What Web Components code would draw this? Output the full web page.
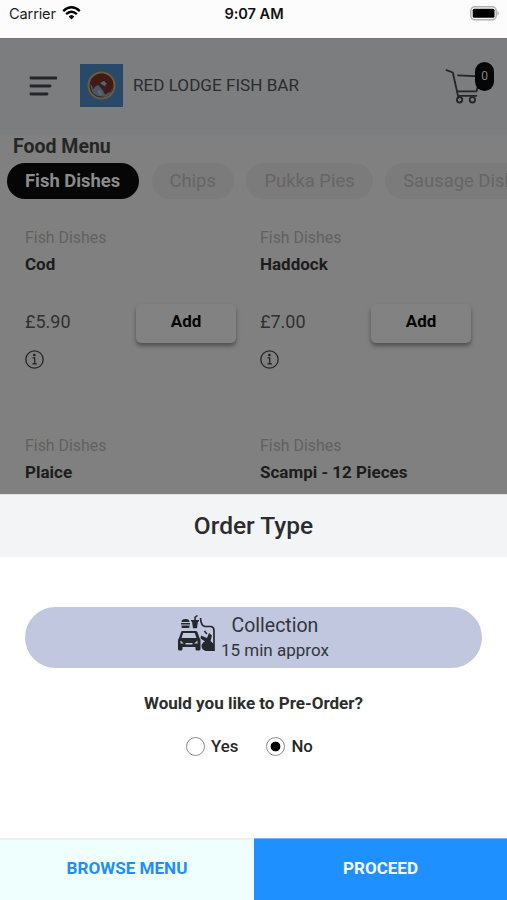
<!DOCTYPE html>
<html lang="en">
<head>
<meta charset="utf-8">
<title>Red Lodge Fish Bar</title>
<style>
html,body{margin:0;height:100%}
body{font-family:Roboto,"Liberation Sans",sans-serif;background:#fff;overflow:hidden}
</style>
</head>
<body>
<order-app></order-app>
<script>
function define(name, html) {
  const t = document.createElement('template');
  t.innerHTML = '<style>:host{display:block;box-sizing:border-box}*{box-sizing:border-box}</style>' + html;
  customElements.define(name, class extends HTMLElement {
    constructor() {
      super();
      this.attachShadow({mode: 'open'}).appendChild(t.content.cloneNode(true));
    }
  });
}

define('status-bar', `
<style>
:host{display:grid;grid-template-columns:1fr auto 1fr;align-items:center;height:38px;padding:0 8px 10px 9px;background:#fcfcfc;color:#1c1c1c;font:14.6px/28px Inter,sans-serif}
.l{display:flex;align-items:center;gap:6px;letter-spacing:-.15px}
.l svg{margin-top:-2px}
.t{font-weight:600;font-size:14.6px;color:#111;letter-spacing:-.05px}
.b{justify-self:end;display:block;margin:-2px -2px 0 0}
svg{display:block}
</style>
<div class="l"><span>Carrier</span>
<svg width="19" height="14" viewBox="0 0 19 14" fill="none" stroke="#000" stroke-width="2.4"><path d="M1.2 5.1Q9.5-2.4 17.8 5.1"/><path d="M4.1 8.1Q9.5 3.2 14.9 8.1"/><path d="M6.6 10.6Q9.5 7.6 12.4 10.6L9.5 13.6z" fill="#000" stroke="none"/></svg></div>
<span class="t">9:07 AM</span>
<svg class="b" width="31" height="15" viewBox="0 0 31 15"><rect x=".8" y=".8" width="25.4" height="13" rx="4" fill="#fff" stroke="#b0b0b0" stroke-width="1.5"/><rect x="2.700" y="2.800" width="21.800" height="9" rx="1.5"/><path d="M27.5 5Q30.3 7.3 27.5 9.6z" fill="#aaa"/></svg>
`);

define('cart-button', `
<style>
:host{position:relative;width:50px;height:46px}
svg{display:block}
span{position:absolute;left:30px;top:1px;width:19px;height:29px;border-radius:10px;background:#060606;color:#858585;font-size:12px;line-height:29px;text-align:center}
</style>
<svg width="50" height="46" viewBox="0 0 50 46" fill="none" stroke="#242527" stroke-width="1.8" stroke-linecap="round" stroke-linejoin="round"><path d="M1.500 9.200L7.800 11.500L12 30.300H31.500L35 15.400L13 14.400"/><path d="M12 30.300L13 34.800H31.500M13 34.800V37"/><circle cx="14.600" cy="38.800" r="2.700"/><circle cx="27.400" cy="38.800" r="2.700"/></svg>
<span>0</span>
`);

define('shop-header', `
<style>
:host{display:flex;align-items:center;height:96px;padding:0 12px 2px 29px;background:#7b7d7f;color:#2b2c2e;border-top:1px solid #747678}
.logo{margin-left:23px}
h1{margin:-2px auto 0 10px;font-size:17.1px;font-weight:400;white-space:nowrap}
svg{display:block}
cart-button{margin-top:-3px}
</style>
<svg width="28" height="20" viewBox="0 0 28 20" stroke="#23242a" stroke-width="2.9" stroke-linecap="round"><path d="M2 2H27M2 10H21M2 18H18"/></svg>
<svg class="logo" width="43" height="43" viewBox="0 0 43 43"><path fill="#284a68" d="M0 0h43v43H0z"/><circle cx="21.5" cy="21.5" r="13" fill="#30261e" stroke="#6e5a3f" stroke-width="2"/><path fill="#4a5664" d="M10.5 20q0 9 7 12l8 1 5-3 2-6-5 4-5-2-4-5-5 2z"/><path fill="#421a14" d="M11 18q3-9 12-8.500q9 2 10 10l-2 8-6 3-2-4 3-3-5-4-5 2-3 4z"/><path fill="#5a6675" d="M20 19l4-2 3 3-2 1 1 2-3-2zM17 28l3-3 2 5-1 2z"/></svg>
<h1>RED LODGE FISH BAR</h1>
<cart-button></cart-button>
`);

define('menu-chip', `
<style>
:host{flex:none;height:36px;border-radius:18px;padding:0 18px;background:#7b7b7b;color:#656565;font-size:18.400px;line-height:36px;white-space:nowrap}
:host([active]){background:#060606;color:#8b8b8b;font-weight:700;font-size:18.400px;width:132px;line-height:35px}
</style><slot></slot>
`);

define('dish-card', `
<style>
:host{width:235px;height:208px;font-size:15.900px;line-height:20px;color:#303030}
.c{color:#606060}
.n{font-weight:700;color:#1c1c1c;margin-top:5.500px;font-size:17px}
.p{display:flex;align-items:center;justify-content:space-between;margin-top:30px;padding-right:24px;font-size:18px;height:40px}
.p slot{display:block;padding-bottom:3px}
button{all:unset;box-sizing:border-box;width:100px;height:39px;padding-bottom:4px;line-height:35px;text-align:center;font-weight:700;font-size:17px;color:#050505;border-radius:5px;background:#828282;box-shadow:0 3px 4px rgba(0,0,0,.38)}
svg{display:block;margin-top:6px}
:host([peek]){height:50px}
:host([peek]) .p,:host([peek]) svg{display:none}
</style>
<div class="c">Fish Dishes</div>
<div class="n"><slot></slot></div>
<div class="p"><slot name="price"></slot><button>Add</button></div>
<svg width="19" height="19" viewBox="0 0 19 19" fill="none" stroke="#242424" stroke-width="1.3"><circle cx="9.500" cy="9.500" r="8.700"/><path d="M7.500 7.800H9.700V13.800M7.300 13.900H12"/><circle cx="9.400" cy="5" r=".7" fill="#242424"/></svg>
`);

define('food-menu', `
<style>
:host{height:360px;background:#808080;overflow:hidden;border-top:1px solid #7d7e80}
h2{margin:1px 0 0 13px;font-size:19.500px;line-height:22px;font-weight:700;color:#262626}
.chips{display:flex;gap:12.500px;margin:5px 0 0 7px}
.grid{display:grid;grid-template-columns:235px 235px;margin:29px 0 0 25px}
</style>
<h2>Food Menu</h2>
<div class="chips"><menu-chip active>Fish Dishes</menu-chip><menu-chip>Chips</menu-chip><menu-chip>Pukka Pies</menu-chip><menu-chip>Sausage Dishes</menu-chip></div>
<div class="grid">
<dish-card>Cod<span slot="price">£5.90</span></dish-card>
<dish-card>Haddock<span slot="price">£7.00</span></dish-card>
<dish-card peek>Plaice</dish-card>
<dish-card peek>Scampi - 12 Pieces</dish-card>
</div>
`);

define('collection-option', `
<style>
:host{display:flex;align-items:center;height:61px;border-radius:31px;background:#c0c7de;padding-left:152px;color:#33353b}
svg{display:block;margin-top:-7px}
.t{text-align:center;margin-left:6px;white-space:nowrap}
.a{font-size:19.500px;line-height:27px;margin-top:-1px}
.b{font-size:17px;line-height:23px}
</style>
<svg width="38" height="38" viewBox="0 0 38 38" fill="#25272d"><path d="M4.500 7q0-3 4-3t4 3zM4 8h9v1.500H4zM4.500 10.500h8v1.500q0 1-1 1h-6q-1 0-1-1zM14 5h8v1.400h-1l-1 6.800h-4l-1-6.800h-1z"/><path d="M18 5V2.300L20.500.5" stroke="#25272d" stroke-width="1.500" fill="none"/><path fill-rule="evenodd" d="M5.500 16h13q1.500 0 2 1.300l2 5.700q1 1 1 2.700V34q0 1.500-1.500 1.500h-2Q18.500 35.500 18.500 34v-2h-13v2q0 1.500-1.500 1.500H2.500Q1 35.500 1 34v-8q0-2 1-3l2-5.700Q4.300 16 5.500 16zM6.200 18L4.500 23h15l-1.700-5zM3.500 25.500v3h3.300zM20.500 25.500l-3.300 3h3.300zM8.500 28h7v1.500h-7z"/><path d="M23.500 3Q24 11 28 11.500H34Q37 12 37 15.500V36" fill="none" stroke="#25272d" stroke-width="1.700"/><path d="M24 20.500l6 2.500 2-5 3 2.500-1.500 5.500q3.500 2 3.500 6V36H29q-4.500-1-4.500-5 0-3 3.500-4.500l-4.500-3zM28 15.500l2.500 3-1.200 1-2.500-3z"/></svg>
<div class="t"><div class="a"><slot></slot></div><div class="b"><slot name="time"></slot></div></div>
`);

define('radio-choice', `
<style>
:host{display:flex;align-items:center;gap:6px;font-size:16.800px;font-weight:500;color:#272727}
i{display:block;width:19px;height:19px;border:1.500px solid #8b8b8b;border-radius:50%;background:#fff;margin-top:1px}
:host([checked]) i{background:radial-gradient(circle,#000 4.600px,#fff 5.200px)}
</style><i></i><span><slot></slot></span>
`);

define('order-sheet', `
<style>
:host{display:flex;flex-direction:column;height:406px;background:#fff}
h2{margin:0;height:63px;background:#f3f4f6;border-top:1px solid #e0e1e2;text-align:center;font-weight:500;font-size:24.500px;line-height:62px;color:#2b2c2e}
collection-option{margin:50px 25px 0}
.q{text-align:center;font-weight:700;font-size:17.050px;line-height:20px;margin-top:25px;color:#2d2d2d}
.r{display:flex;justify-content:center;gap:28px;margin-top:23px;padding-right:8px;line-height:20px}
.f{margin-top:auto;display:grid;grid-template-columns:254px 253px;height:62px}
.f div{text-align:center;font-size:17.100px;font-weight:700;line-height:57px;border-top:2px solid #eef0f0}
.f .x{background:#effffe;color:#1f8dfa}
.f .y{background:#1e90ff;color:#f5fbff;line-height:59px;font-size:17px;border-top:1px solid #74b5f6}
</style>
<h2>Order Type</h2>
<collection-option>Collection<span slot="time">15 min approx</span></collection-option>
<div class="q">Would you like to Pre-Order?</div>
<div class="r"><radio-choice>Yes</radio-choice><radio-choice checked>No</radio-choice></div>
<div class="f"><div class="x">BROWSE MENU</div><div class="y">PROCEED</div></div>
`);

define('order-app', `
<style>:host{width:507px;height:900px;overflow:hidden}</style>
<status-bar></status-bar><shop-header></shop-header><food-menu></food-menu><order-sheet></order-sheet>
`);
</script>
</body>
</html>
